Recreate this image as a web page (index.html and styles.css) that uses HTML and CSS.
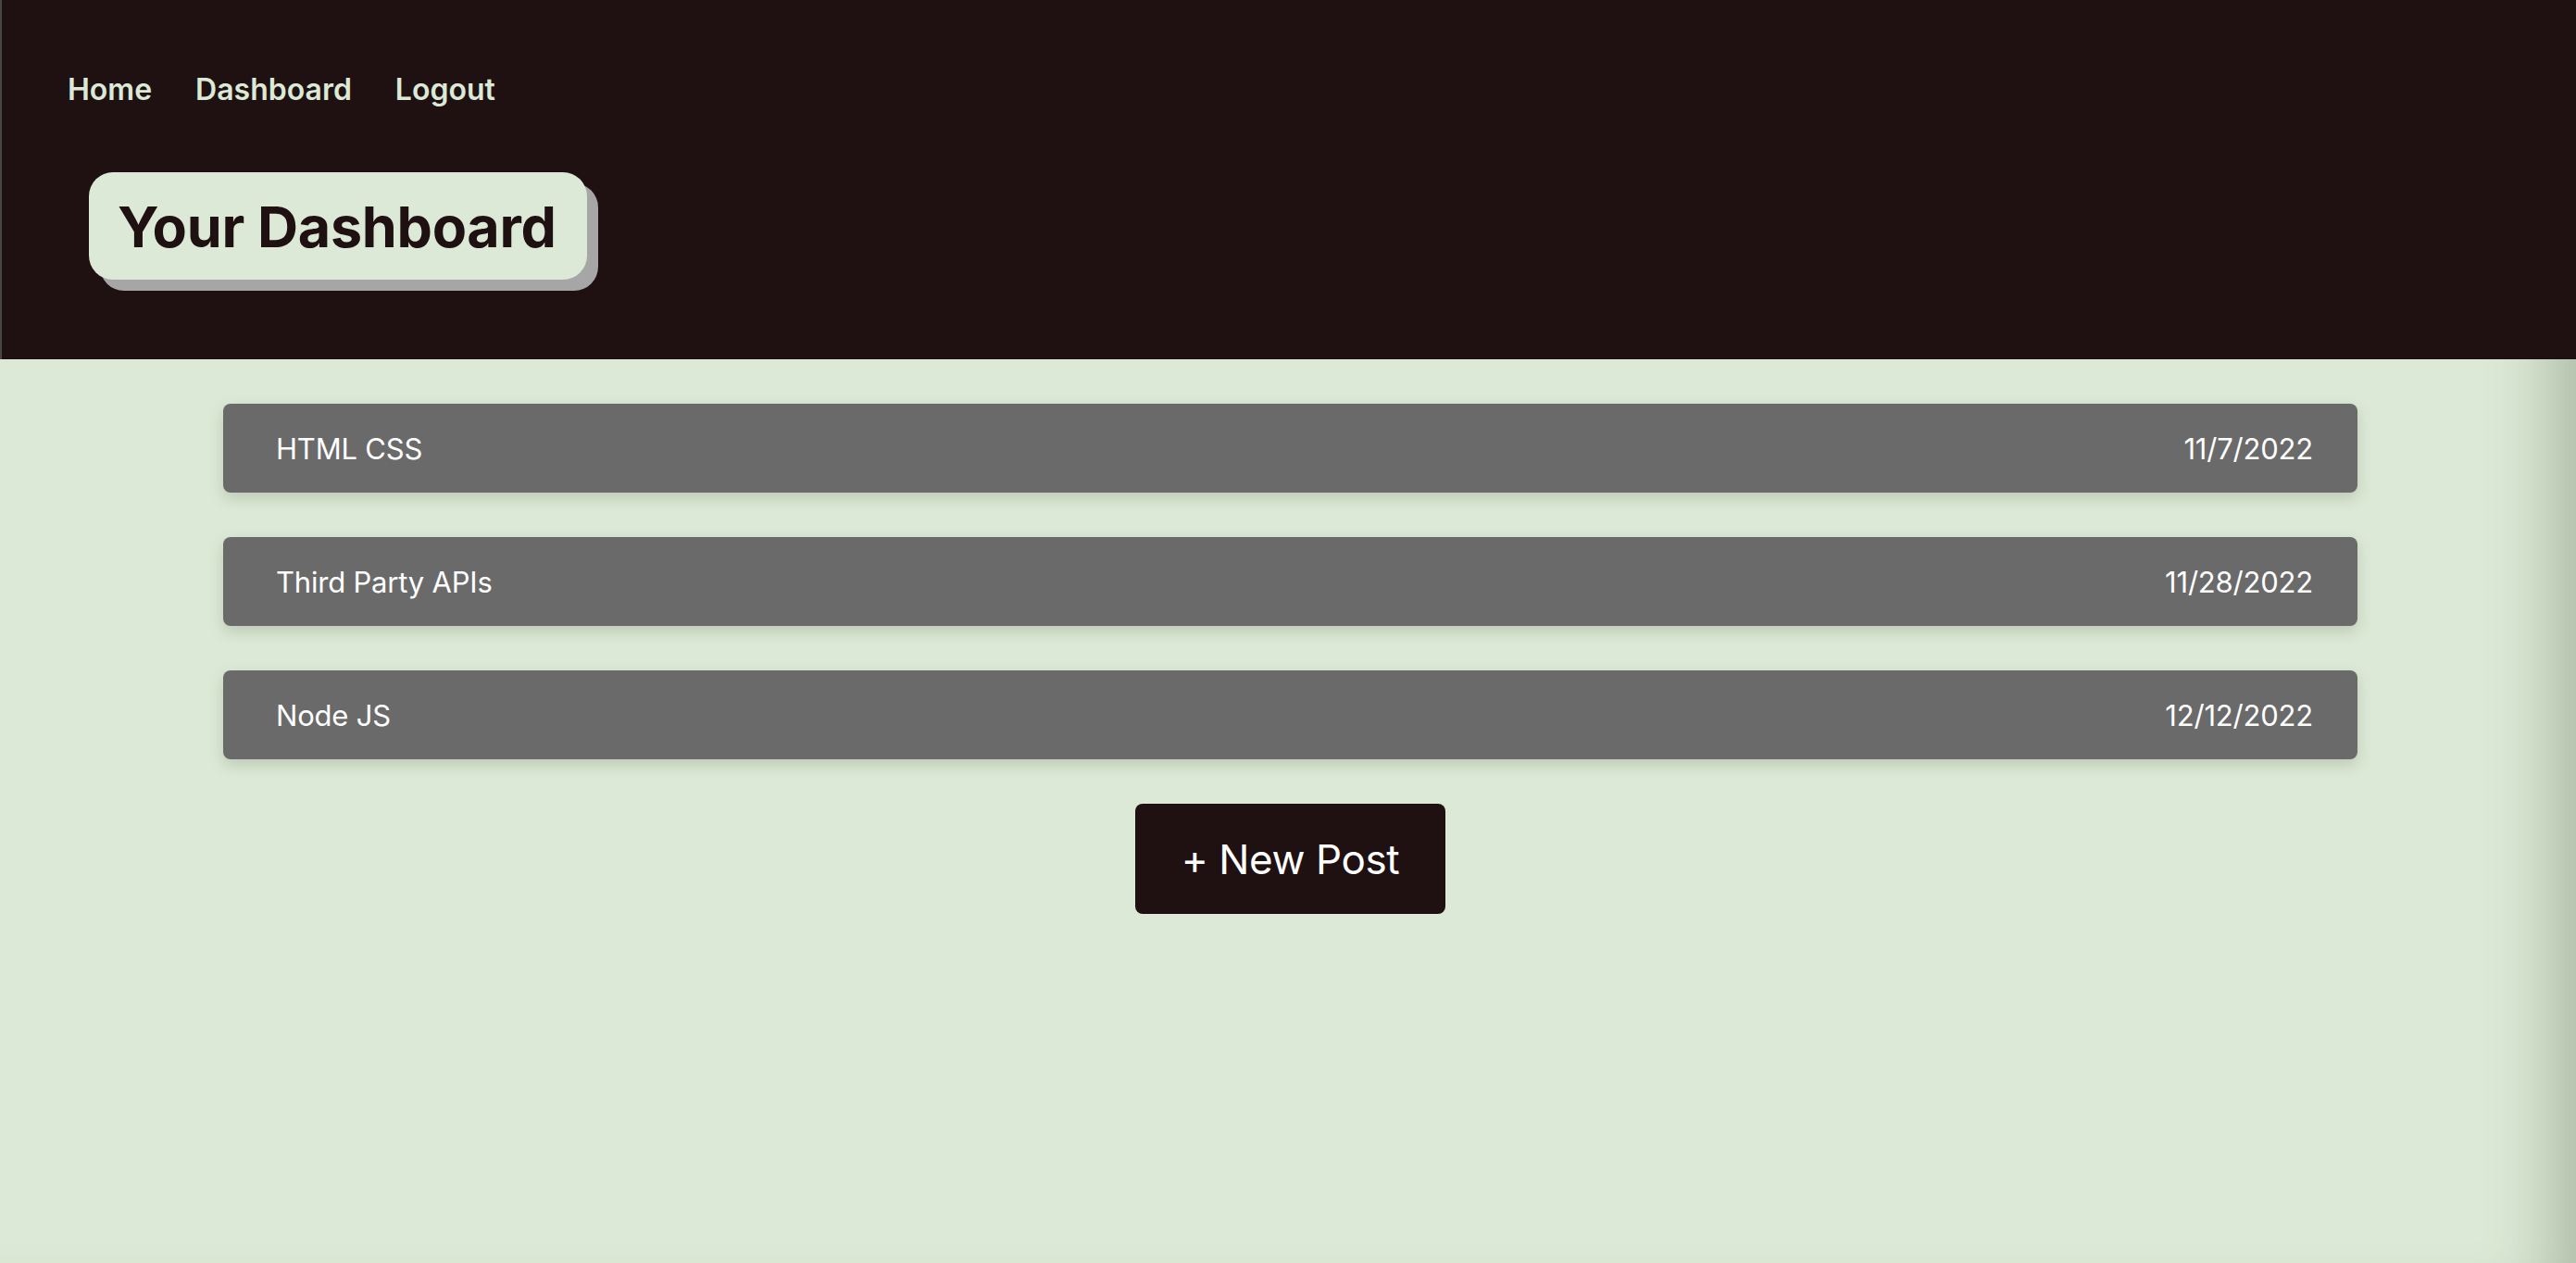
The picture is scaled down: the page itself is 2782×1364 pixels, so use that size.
FILE: index.html
```html
<!DOCTYPE html>
<html lang="en">
<head>
<meta charset="utf-8">
<title>Your Dashboard</title>
<link rel="stylesheet" href="styles.css">
</head>
<body>
<header class="site-header">
  <nav class="nav">
    <a class="nav-link" href="#">Home</a>
    <a class="nav-link" href="#">Dashboard</a>
    <a class="nav-link" href="#">Logout</a>
  </nav>
  <h1 class="page-title">Your Dashboard</h1>
</header>
<main class="content">
  <ul class="post-list">
    <li class="post-card"><span class="post-title">HTML CSS</span><span class="post-date">11/7/2022</span></li>
    <li class="post-card"><span class="post-title">Third Party APIs</span><span class="post-date">11/28/2022</span></li>
    <li class="post-card"><span class="post-title">Node JS</span><span class="post-date">12/12/2022</span></li>
  </ul>
  <button class="new-post" type="button">+ New Post</button>
</main>
</body>
</html>
```
FILE: styles.css
```css
* { box-sizing: border-box; }
html, body { margin: 0; padding: 0; }
body {
  font-family: Inter, "Noto Sans", sans-serif;
  background: #dce9d6;
  min-height: 100vh;
  box-shadow: inset -80px 0 70px -55px rgba(60, 80, 50, 0.3);
}
.site-header {
  background: #1f1111;
  height: 388px;
  padding: 77px 0 0 71px;
  border-left: 2px solid #4a4444;
}
.nav {
  display: flex;
  gap: 47px;
}
.nav-link {
  color: #dce9d6;
  text-decoration: none;
  font-size: 32px;
  font-weight: 600;
  line-height: normal;
}
.page-title {
  display: inline-block;
  margin: 70px 0 0 23px;
  padding: 22px 33px 19px 31px;
  background: #dce9d6;
  color: #1f1111;
  font-size: 61px;
  font-weight: 700;
  letter-spacing: -0.3px;
  line-height: 75px;
  border-radius: 26px;
  box-shadow: 12px 12px 0 #a6a6a6;
}
.content {
  display: flex;
  flex-direction: column;
  align-items: center;
  padding-top: 48px;
}
.post-list {
  list-style: none;
  margin: 0 0 0 5px;
  padding: 0;
  width: 2305px;
  display: flex;
  flex-direction: column;
  gap: 48px;
}
.post-card {
  display: flex;
  justify-content: space-between;
  align-items: center;
  height: 96px;
  padding: 0 48px 0 57px;
  background: #6a6a6a;
  color: #ffffff;
  border-radius: 8px;
  font-size: 31px;
  letter-spacing: -0.2px;
  box-shadow: 0 6px 16px rgba(60, 80, 50, 0.2);
}
.new-post {
  margin: 48px 0 0 5px;
  height: 119px;
  padding: 0 50px;
  background: #1f1111;
  color: #ffffff;
  border: none;
  border-radius: 8px;
  font-family: inherit;
  font-size: 44px;
  letter-spacing: -0.4px;
}
```
